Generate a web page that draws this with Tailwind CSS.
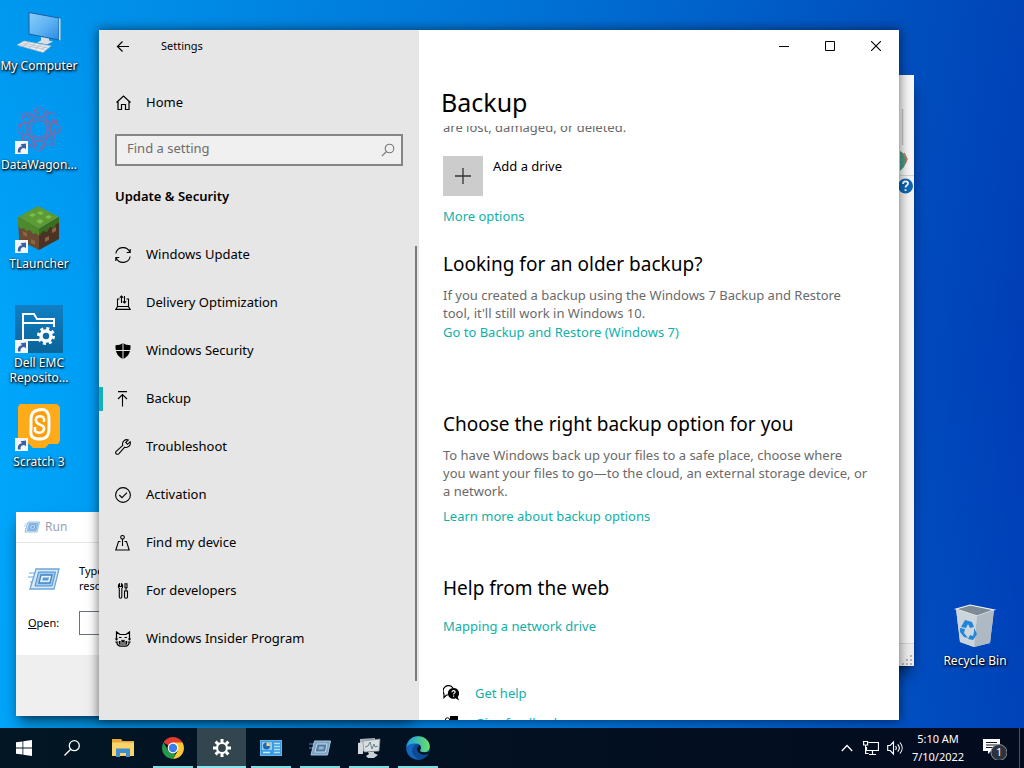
<!DOCTYPE html>
<html lang="en">
<head>
<meta charset="utf-8">
<title>Settings</title>
<script src="https://cdn.jsdelivr.net/npm/@tailwindcss/browser@4"></script>
</head>
<body class="flex h-screen flex-col overflow-hidden bg-[#0078d7] font-['Noto_Sans','Open_Sans',sans-serif] text-[13px] text-black">
<svg class="absolute h-0 w-0" aria-hidden="true">
  <defs>
    <symbol id="shortcut" viewBox="0 0 13 13"><path d="M0 0h13v13H0z" fill="#f4f6fa"/><path d="M3 11.500C2.400 8 4 5.500 7 5.300L5.600 3.200 11 2.500v5.800L9.300 7C6.500 7 5 8.500 5.600 11.500z" fill="#3a5fa8"/></symbol>
    <symbol id="run" viewBox="0 0 32 24"><path d="M1 6h6M0 10h5M2 15h4" stroke="#9cc8ec" stroke-width="1.500"/><path d="M8 2h23l-5 20H2z" fill="#d7eafa" stroke="#6ba6dc" stroke-width="1.300"/><path d="M10.500 5h17l-3.500 14H7z" fill="#9dcaf0" stroke="#4f8fcf"/><path d="M13 8h11l-2 8H11z" fill="#e3f1fc" stroke="#4483c4" stroke-width="1.300"/><path d="M15 10.500h6l-.8 3h-6z" fill="#5a98d6"/></symbol>
    <linearGradient id="screen" x1="0" y1="0" x2="1" y2="1"><stop offset="0" stop-color="#8ccdfb"/><stop offset=".5" stop-color="#5fb4f3"/><stop offset="1" stop-color="#2b8be0"/></linearGradient>
    <linearGradient id="edgeA" x1="0" y1="0" x2="1" y2="0"><stop offset="0" stop-color="#1b9de0"/><stop offset="1" stop-color="#6bdf6a"/></linearGradient>
    <linearGradient id="dell" x1="0" y1="0" x2="0" y2="1"><stop offset="0" stop-color="#0f7fc6"/><stop offset="1" stop-color="#0b6498"/></linearGradient>
  </defs>
</svg>

<main class="relative min-h-0 flex-1 overflow-hidden bg-linear-to-r from-[#00a6fb] via-[#0078dc] to-[#003db6]">
  <div class="absolute inset-0 bg-linear-to-b from-[#0060c0]/20 via-transparent to-[#00a0f0]/5"></div>

  <!-- Desktop shortcuts -->
  <ul class="absolute left-0 top-2 grid w-[78px] auto-rows-[99px] text-center text-xs leading-[15px] text-white [text-shadow:1px_1px_2px_#000,0_1px_3px_#000]">
    <li class="flex flex-col items-center gap-0.5">
      <svg class="h-12 w-12 shrink-0" viewBox="0 0 48 48"><path d="M14 4.500l30 5.500v22L14 26z" fill="url(#screen)" stroke="#1d5f9e"/><path d="M44 10l1.500 1v21.500L44 32z" fill="#cfd6dc"/><path d="M26 29l8 1.500v2l4 1-6 3-10-2 4-2z" fill="#d8dee4"/><path d="M9 33l27 5-8 6.500L2 37z" fill="#eceff2" stroke="#a9b4bd" stroke-width=".7"/><path d="M8 35l25 5M5.500 36.500l25 5M14 34l-6 4.500M20 35.500l-6 4.500M26 36.500l-6 5M31 37.500l-5 5" stroke="#aab5be" stroke-width=".7"/></svg>
      <span class="whitespace-nowrap">My Computer</span>
    </li>
    <li class="flex flex-col items-center gap-0.5">
      <svg class="h-12 w-12 shrink-0" viewBox="0 0 48 48"><g fill="none" stroke="#7f6cb4" stroke-width="1.200" opacity=".85"><ellipse cx="24" cy="22" rx="22" ry="8"/><ellipse cx="24" cy="22" rx="22" ry="8" transform="rotate(45 24 22)"/><ellipse cx="24" cy="22" rx="22" ry="8" transform="rotate(90 24 22)"/><ellipse cx="24" cy="22" rx="22" ry="8" transform="rotate(135 24 22)"/><circle cx="24" cy="22" r="12" stroke="#a8598c"/><circle cx="24" cy="22" r="16" stroke-dasharray="4 5" stroke="#b5527f"/><circle cx="24" cy="22" r="19" stroke-dasharray="5 7" stroke="#b5527f"/></g><use href="#shortcut" y="34" width="13" height="13"/></svg>
      <span class="whitespace-nowrap">DataWagon...</span>
    </li>
    <li class="flex flex-col items-center gap-0.5">
      <svg class="h-12 w-12 shrink-0" viewBox="0 0 48 48"><path d="M3 11L23 0l21 11-20 12z" fill="#5b9a35"/><path d="M3 11l21 12v21L4 34z" fill="#6a4a32"/><path d="M24 23l20-12v22L24 44z" fill="#4a3322"/><path d="M3 11l21 12v7l-3-3-3 1-3-4-4 1-2-3-3 1-3-3z" fill="#4c8a2b"/><path d="M24 23l20-12v6l-3 1-2 4-4-1-3 5-4-1-4 5z" fill="#3b6f20"/><path d="M14 9l4-2 3 2-4 2zM25 5l4 2-3 2-4-2zM30 11l4-2 3 2-4 2zM21 15l4-2 4 2-4 3z" fill="#7cbd4c"/><path d="M8 25l4 2v4l-4-2zM16 33l4 2v4l-4-2zM30 32l4-2v4l-4 2zM37 23l4-2v4l-4 2z" fill="#8a6546"/><use href="#shortcut" y="34" width="13" height="13"/></svg>
      <span>TLauncher</span>
    </li>
    <li class="flex flex-col items-center gap-0.5">
      <svg class="h-12 w-12 shrink-0" viewBox="0 0 48 48"><path d="M0 0h48v48H0z" fill="url(#dell)"/><path d="M24 35H8V9h11l3 5h17v8M8 18h31" fill="none" stroke="#fff" stroke-width="2"/><circle cx="31" cy="31" r="7.500" fill="none" stroke="#fff" stroke-width="3" stroke-dasharray="3 2.890"/><circle cx="31" cy="31" r="5" fill="#0b6ca8" stroke="#fff" stroke-width="3.500"/><use href="#shortcut" y="35" width="13" height="13"/></svg>
      <span class="whitespace-nowrap">Dell EMC<br>Reposito...</span>
    </li>
    <li class="flex flex-col items-center gap-0.5">
      <svg class="h-12 w-12 shrink-0" viewBox="0 0 48 48"><path d="M5 0h37l3 3v34l-2 3h-9l-4 4H18l-4-4H5l-2-3V3z" fill="#ffab19"/><path d="M23 6c8-2 11 2 11 10v8c0 8-3 11-9 11-8 0-10-3-9-11V15c0-5 2-8 7-9z" fill="#ff9d0a" stroke="#fff" stroke-width="3"/><path d="M29 14v4M29 14c-3-3-9-2-8 3s9 3 8 8-7 4-9 2v-4" fill="none" stroke="#fff" stroke-width="2.500"/><use href="#shortcut" y="34" width="13" height="13"/></svg>
      <span>Scratch 3</span>
    </li>
  </ul>

  <div class="absolute bottom-[60px] right-[9px] flex w-20 flex-col items-center gap-0.5 text-xs leading-[15px] text-white [text-shadow:1px_1px_2px_#000,0_1px_3px_#000]">
    <svg class="h-12 w-12" viewBox="0 0 48 48"><path d="M5 6l14-4 24 5-4 33-16 4-14-5z" fill="#c3cdd6"/><path d="M5 6l14-4 24 5-17 6z" fill="#7e8b96" stroke="#eef2f5" stroke-width="1.200"/><path d="M26 13l17-6-4 33-16 4z" fill="#aeb9c4"/><path d="M26 13L5 6l4 33 14 5z" fill="#ccd4dc"/><path d="M14 17l7 2 2 5-4 1-2-4-2 4-5-1zM9 25l5 1-1 4 4 5-4-1-4-5zM23 25l3 6-4 6-5-1 2-4 3 1 1-4z" fill="#1f86dc"/></svg>
    <span class="whitespace-nowrap">Recycle Bin</span>
  </div>

  <!-- Control panel window, mostly covered -->
  <div class="absolute bottom-[62px] left-[420px] right-[110px] top-[75px] flex flex-col items-end bg-[#f3f3f3] shadow-lg shadow-black/50">
    <div class="flex h-[101px] w-3.5 items-end border-b border-gray-300 bg-[#f6f6f6]">
      <svg class="h-[76px] w-3.5" viewBox="0 0 14 76"><path d="M2.500 10v36" stroke="#c4c7ca" stroke-width="1.500"/><path d="M0 52l3 2 4 7-3 7-4 4z" fill="#4f9a86"/><path d="M4 54l3 6-2 5" fill="none" stroke="#c0775a" stroke-width="1.500"/></svg>
    </div>
    <svg class="mt-0.5 h-4 w-4" viewBox="0 0 16 16"><circle cx="7.500" cy="8" r="7.500" fill="#0f66b5"/><path d="M5 6c0-3.500 5-3.500 5-.5 0 2-2.500 1.800-2.500 4M7.500 11.200v1.800" fill="none" stroke="#fff" stroke-width="1.800"/></svg>
    <div class="mt-auto flex h-[23px] w-full items-end justify-end border-t border-gray-300 bg-[#ececec]">
      <svg class="h-3 w-3" viewBox="0 0 12 12" fill="#b4b4b4"><path d="M8 1h2v2H8zM8 5h2v2H8zM8 9h2v2H8zM4 5h2v2H4zM4 9h2v2H4zM0 9h2v2H0z"/></svg>
    </div>
  </div>

  <!-- Run dialog -->
  <section class="absolute bottom-3 left-4 flex h-[204px] w-[399px] flex-col bg-white text-xs shadow-lg shadow-black/50">
    <header class="flex h-[31px] items-center gap-[5px] border-b border-gray-200 pl-2 text-gray-400"><svg class="h-3.5 w-4" viewBox="0 0 32 24"><use href="#run"/></svg>Run</header>
    <div class="mt-5 flex gap-4 pl-3 text-[11px] leading-[15px]">
      <svg class="mt-1 h-6 w-8 shrink-0" viewBox="0 0 32 24"><use href="#run"/></svg>
      <p class="pl-[3px]">Type the name of a program, folder, document, or<br>resource, and Windows will open it for you.</p>
    </div>
    <div class="mt-[18px] flex items-center pl-3 text-[11px]">
      <label for="open" class="w-[51px]"><u>O</u>pen:</label>
      <input id="open" type="text" class="h-6 w-72 border border-gray-500 bg-white">
    </div>
    <div class="mt-auto h-[61px] bg-[#efefef]"></div>
  </section>

  <!-- Settings window -->
  <section class="absolute bottom-2 left-[99px] right-[125px] top-[30px] flex bg-white shadow-[0_0_10px_1px_rgba(0,0,0,0.5)]">
    <aside class="flex w-80 shrink-0 flex-col bg-[#e6e6e6]">
      <header class="flex h-8 items-center gap-[30px] pl-4 pt-px text-[11px]">
        <button aria-label="Back"><svg class="h-4 w-4" viewBox="0 0 16 16" fill="none" stroke="#000" stroke-width="1.200"><path d="M14 7.500H2.500M7.500 2.500l-5 5 5 5"/></svg></button>
        <span>Settings</span>
      </header>
      <a href="#" class="mt-[17px] flex h-12 items-center gap-[15px] pl-4"><svg class="h-4 w-4" viewBox="0 0 16 16" fill="none" stroke="#000" stroke-width="1.200"><path d="M1.500 7.500L8.500 1l7 6.500M3 6.500v8h3.500v-5h4v5H14v-8"/></svg>Home</a>
      <div class="mx-4 mt-[7px] flex h-8 items-center border-2 border-[#858585] bg-[#f0f0f0] pr-1.5">
        <input type="text" aria-label="Find a setting" placeholder="Find a setting" class="mb-0.5 min-w-0 flex-1 bg-transparent pl-2.5 text-[13px] outline-none placeholder:text-[#6d6d6d]">
        <button aria-label="Search"><svg class="h-3.5 w-3.5" viewBox="0 0 14 14" fill="none" stroke="#777" stroke-width="1.100"><circle cx="8.500" cy="5.500" r="4.300"/><path d="M5.500 8.500L.8 13.200"/></svg></button>
      </div>
      <h2 class="mt-5 pl-4 text-[13px] font-semibold leading-5">Update &amp; Security</h2>
      <div class="mt-[25px] flex flex-1 justify-between">
        <nav class="flex-1">
          <a href="#" class="flex h-12 items-center gap-[15px] pl-4"><svg class="h-4 w-4" viewBox="0 0 16 16" fill="none" stroke="#000" stroke-width="1.100"><path d="M.8 6.500A7.400 7.400 0 0 1 14.800 5M15.200 9.500A7.400 7.400 0 0 1 1.200 11M15.200 2v3.500h-3.500M.8 14v-3.500h3.500"/></svg>Windows Update</a>
          <a href="#" class="flex h-12 items-center gap-[15px] pl-4"><svg class="h-4 w-4" viewBox="0 0 16 16" fill="none" stroke="#000" stroke-width="1.100"><path d="M4.500 4H2.500v7.500L.8 14.400h14.400l-1.700-2.900V4h-2M2.500 11.500h11M6.500 8V1M4.800 2.700L6.500 1l1.700 1.700M9.500 1v7M7.800 6.300L9.500 8l1.700-1.700"/></svg>Delivery Optimization</a>
          <a href="#" class="flex h-12 items-center gap-[15px] pl-4"><svg class="h-4 w-4" viewBox="0 0 16 16"><path d="M8 0c2 1.700 4.500 2.200 7.500 2.200C15.800 9 13.500 13.500 8 16 2.500 13.500.2 9 .5 2.200 3.500 2.200 6 1.700 8 0z"/><path d="M8 0v16M0 7.500h16" stroke="#e6e6e6"/></svg>Windows Security</a>
          <a href="#" aria-current="page" class="relative flex h-12 items-center gap-[15px] pl-4"><span class="absolute left-0 h-6 w-1 bg-[#13b2b5]"></span><svg class="h-4 w-4" viewBox="0 0 16 16" fill="none" stroke="#000" stroke-width="1.100"><path d="M3 .6h9M7.500 15.500v-12M3 8l4.500-4.500L12 8"/></svg>Backup</a>
          <a href="#" class="flex h-12 items-center gap-[15px] pl-4"><svg class="h-4 w-4" viewBox="0 0 16 16" fill="none" stroke="#000" stroke-width="1.100"><path d="M13.300.9A4.300 4.300 0 0 0 7.800 6.300L1.200 12.300a1.750 1.750 0 0 0 2.500 2.500L9.700 8.200A4.300 4.300 0 0 0 15.100 2.700L12.500 5.300 10.700 3.500z"/></svg>Troubleshoot</a>
          <a href="#" class="flex h-12 items-center gap-[15px] pl-4"><svg class="h-4 w-4" viewBox="0 0 16 16" fill="none" stroke="#000" stroke-width="1.100"><circle cx="8" cy="8" r="7.400"/><path d="M4.300 8l2.700 2.700 5-5"/></svg>Activation</a>
          <a href="#" class="flex h-12 items-center gap-[15px] pl-4"><svg class="h-4 w-4" viewBox="0 0 16 16" fill="none" stroke="#000" stroke-width="1.100"><circle cx="7.500" cy="2.300" r="1.800"/><path d="M7.500 4.100V11M5.500 6.500H3.500L.8 15h13.400l-2.700-8.500h-2"/></svg>Find my device</a>
          <a href="#" class="flex h-12 items-center gap-[15px] pl-4"><svg class="h-4 w-4" viewBox="0 0 16 16" fill="none" stroke="#000" stroke-width="1.100"><path d="M4.500.8C3 1.800 3 4.700 4.300 5.500V14c0 1.700 2.500 1.700 2.500 0V5.500C8 4.700 8 1.800 6.600.8v2.700H4.500zM10 .8h2v4h-2zM11 4.800v3M9.500 8h3v6c0 1.600-3 1.600-3 0zM9 8h4"/></svg>For developers</a>
          <a href="#" class="flex h-12 items-center gap-[15px] pl-4"><svg class="h-4 w-4" viewBox="0 0 16 16" fill="none" stroke="#000" stroke-width="1.200"><path d="M1.500 9.500V.9L5 3.500h6L14.500.9v8.600M0 8h3M13 8h3M.3 11h3M12.700 11h3M1.700 10.500c0 3 2 4.700 4 4.700h4.600c2 0 4-1.700 4-4.700M4 6.500h2.500M9.500 6.500H12M5 11h6M5 13h6M6.500 9L8 10.500 9.500 9M4.500 10v3.500M11.500 10v3.500"/></svg>Windows Insider Program</a>
        </nav>
        <div class="mb-[39px] mr-0.5 mt-[15px] w-0.5 bg-[#7c7c7c]"></div>
      </div>
    </aside>

    <div class="flex min-w-0 flex-1 flex-col pl-6">
      <div class="flex h-8 justify-end">
        <button aria-label="Minimize" class="flex w-[46px] items-center justify-center"><svg class="h-2.5 w-2.5" viewBox="0 0 10 10"><path d="M0 5.500h10" stroke="#000"/></svg></button>
        <button aria-label="Maximize" class="flex w-[46px] items-center justify-center"><svg class="h-2.5 w-2.5" viewBox="0 0 10 10"><path d="M.5.5h9v9h-9z" fill="none" stroke="#000"/></svg></button>
        <button aria-label="Close" class="flex w-[46px] items-center justify-center"><svg class="h-2.5 w-2.5" viewBox="0 0 10 10"><path d="M0 0l10 10M10 0L0 10" stroke="#000" stroke-width="1.100"/></svg></button>
      </div>
      <h1 class="-ml-0.5 mt-6 text-[25px] leading-8">Backup</h1>
      <div class="mt-2 min-h-0 flex-1 overflow-hidden pr-5 text-[13px] leading-[18px]">
        <p class="-mt-2 text-[#6a6a6a]">are lost, damaged, or deleted.</p>
        <div class="mt-5 flex gap-2.5">
          <button aria-label="Add a drive" class="flex h-10 w-10 items-center justify-center bg-[#cccccc]"><svg class="h-4 w-4" viewBox="0 0 16 16"><path d="M8 0v16M0 8h16" stroke="#333" stroke-width="1.300"/></svg></button>
          <span class="mt-px">Add a drive</span>
        </div>
        <a href="#" class="mt-[11px] block text-[#10b0a8]">More options</a>
        <h2 class="mt-[27px] text-[19px] leading-6">Looking for an older backup?</h2>
        <p class="mt-2.5 text-[#6a6a6a]">If you created a backup using the Windows 7 Backup and Restore<br>tool, it'll still work in Windows 10.</p>
        <a href="#" class="mt-px block text-[#10b0a8]">Go to Backup and Restore (Windows 7)</a>
        <h2 class="mt-[71px] text-[19px] leading-6">Choose the right backup option for you</h2>
        <p class="mt-2.5 text-[#6a6a6a]">To have Windows back up your files to a safe place, choose where<br>you want your files to go—to the cloud, an external storage device, or<br>a network.</p>
        <a href="#" class="mt-[7px] block text-[#10b0a8]">Learn more about backup options</a>
        <h2 class="mt-[51px] text-[19px] leading-6">Help from the web</h2>
        <a href="#" class="mt-[17px] block text-[#10b0a8]">Mapping a network drive</a>
        <a href="#" class="mt-[49px] flex items-center gap-4 text-[#10b0a8]"><svg class="h-4 w-4" viewBox="0 0 16 16"><path d="M5 10H3.500L1 12.500V9A5.200 5.200 0 1 1 10 3" fill="none" stroke="#000" stroke-width="1.200"/><path d="M10.500 3a5.400 5.400 0 1 0 2 10.300L16 15.500l-1.200-3.600A5.400 5.400 0 0 0 10.500 3z"/><path d="M9 7.200c0-2.200 3.200-2 3.200-.2 0 1.200-1.600 1.100-1.600 2.500M10.600 10.500v1.200" fill="none" stroke="#fff" stroke-width="1.100"/></svg>Get help</a>
        <a href="#" class="mt-3 flex items-center gap-4 text-[#10b0a8]"><svg class="h-4 w-4" viewBox="0 0 16 16"><path d="M7 1h8v8h-4l-3 3V9H7z"/><circle cx="4.500" cy="5" r="2.200" fill="none" stroke="#000"/><path d="M.5 15c0-8 8-8 8 0" fill="none" stroke="#000"/></svg>Give feedback</a>
      </div>
    </div>
  </section>
</main>

<!-- Taskbar -->
<footer class="flex h-10 shrink-0 items-stretch bg-linear-to-r from-[#021624] to-[#030b1f] text-white">
  <button aria-label="Start" class="flex w-12 items-center justify-center"><svg class="h-4 w-4" viewBox="0 0 16 16" fill="#fff"><path d="M0 2.300l6.500-.9v6.100H0zM7.300 1.300L16 0v7.500H7.300zM0 8.400h6.500v6.200L0 13.700zM7.300 8.400H16V16l-8.700-1.300z"/></svg></button>
  <button aria-label="Search" class="flex w-12 items-center justify-center"><svg class="h-4 w-4" viewBox="0 0 16 16" fill="none" stroke="#fff" stroke-width="1.300"><circle cx="10.300" cy="5.700" r="5"/><path d="M6.700 9.300L.5 15.500"/></svg></button>
  <button aria-label="File Explorer" class="ml-0.5 mr-px flex w-[49px] items-center justify-center"><svg class="h-[18px] w-[22px]" viewBox="0 0 22 18"><path d="M0 0h9l1.500 2H22v15H0z" fill="#e5aa35"/><path d="M0 3.500h22V17H0z" fill="#fbd56b"/><path d="M4 9.500h14V18h-4v-4H8v4H4z" fill="#3d8fd0"/></svg></button>
  <div class="flex">
    <button aria-label="Chrome" class="relative flex w-[49px] items-center justify-center"><svg class="h-[22px] w-[22px]" viewBox="0 0 22 22"><path d="M11 11L1.500 5.500A11 11 0 0 1 20.500 5.500z" fill="#e33b2e"/><path d="M11 11V5.500h9.500A11 11 0 0 1 11 22l4.800-8.300z" fill="#fcc934"/><path d="M1.500 5.500l4.700 8.300L11 16.500h2.800L11 22A11 11 0 0 1 1.500 5.500z" fill="#279847"/><circle cx="11" cy="11" r="5.400" fill="#fff"/><circle cx="11" cy="11" r="4.200" fill="#3b7ded"/></svg><span class="absolute bottom-0 h-0.5 w-10 bg-[#7fdde2]"></span></button>
    <button aria-label="Settings" class="relative flex w-[49px] items-center justify-center bg-[#334650]"><svg class="h-[18px] w-[18px]" viewBox="0 0 18 18" fill="none" stroke="#fff"><circle cx="9" cy="9" r="5" stroke-width="2.200"/><path d="M9 0v4M9 14v4M0 9h4M14 9h4M2.600 2.600l2.900 2.900M12.500 12.500l2.900 2.900M2.600 15.400l2.900-2.900M12.500 5.500l2.900-2.900" stroke-width="3"/></svg><span class="absolute bottom-0 h-0.5 w-full bg-[#8be6ec]"></span></button>
    <button aria-label="Control Panel" class="relative flex w-[49px] items-center justify-center"><svg class="h-4 w-[22px]" viewBox="0 0 22 16"><path d="M0 0h22v16H0z" fill="#63b8ee"/><path d="M1 1h20v14H1z" fill="#3a9be2"/><path d="M2 2h10v8H2z" fill="#8fcbf3"/><circle cx="6.500" cy="6" r="3.500" fill="#1e67b8"/><path d="M6.500 6V2.500A3.500 3.500 0 0 1 10 6z" fill="#fbd56b"/><path d="M14 3.500h6M14 6.500h6M14 9.500h6M14 12.500h6" stroke="#b5dffa" stroke-width="1.300"/><path d="M3 12.500h7" stroke="#d5effc" stroke-width="1.500"/></svg><span class="absolute bottom-0 h-0.5 w-10 bg-[#7fdde2]"></span></button>
    <button aria-label="Run" class="relative flex w-[49px] items-center justify-center"><svg class="h-4 w-[22px]" viewBox="0 0 22 16"><path d="M0 4h5M0 8h4" stroke="#5689a8"/><path d="M5.500 1H21.500l-3 14H2z" fill="#7fa3c0" stroke="#a7c8e2"/><path d="M8 4h10l-1.600 8H6z" fill="#54799b" stroke="#c1daee"/><path d="M10 6.500h5l-.7 3H9.300z" fill="#8fb6d8"/></svg><span class="absolute bottom-0 h-0.5 w-10 bg-[#7fdde2]"></span></button>
    <button aria-label="Performance Monitor" class="relative flex w-[49px] items-center justify-center"><svg class="h-5 w-6" viewBox="0 0 24 20"><path d="M3 1l15-1v12L3 13z" fill="#aab4ba"/><path d="M1 5l5-1v12H1z" fill="#d3d9dc"/><path d="M6 3l17-2-1 12-15 1z" fill="#d9dfe2" stroke="#87949c" stroke-width=".7"/><path d="M8 9l3-1 2-4 2 7 2-5 1 3 3-1" fill="none" stroke="#6b838e"/><path d="M11 14h6v1l4 2-4 3h-6l-2-2 3-2z" fill="#cbd2d6"/></svg><span class="absolute bottom-0 h-0.5 w-10 bg-[#7fdde2]"></span></button>
    <button aria-label="Edge" class="relative flex w-[49px] items-center justify-center"><svg class="h-6 w-6" viewBox="0 0 24 24"><circle cx="12" cy="12" r="11.800" fill="#1267bd"/><path d="M.3 11C1.500 4 6.500.2 12 .2c7 0 11.800 5 11.800 10 0 4-2.800 6-6 6-2.500 0-4-1-3.500-2 1.500-2 1-6-3.300-6.500C6 7 1.500 9 .3 11z" fill="url(#edgeA)"/><path d="M11 7.700C7.500 9 5 13 6.500 17s5 6.500 9 6.300c3-1 5.500-3 6.500-5.300-5 2.500-10.500.5-11-4-.2-1.700.5-3 1.300-3.800 1.300.5 2 2 1.700 3.300 1.300-2 .8-5.200-3-5.800z" fill="#0b4a94"/><path d="M14 14.200c1.300-1.700 1-4-.6-5.200l-2.100 2.500c-.6 1-.4 3 .7 4.500 2 2.700 7 4 10.500 1.500l1.500-3c-2 1.500-4.300 1.700-6.200 1.700-2.500 0-4.200-1-3.800-2z" fill="#021422"/></svg><span class="absolute bottom-0 h-0.5 w-10 bg-[#7fdde2]"></span></button>
  </div>
  <div class="ml-auto flex items-center pr-1">
    <button aria-label="Show hidden icons"><svg class="h-3 w-3" viewBox="0 0 12 12"><path d="M.8 9L6 3.500 11.200 9" fill="none" stroke="#fff" stroke-width="1.300"/></svg></button>
    <svg class="ml-2.5 h-4 w-4" viewBox="0 0 16 16" fill="none" stroke="#fff" stroke-width="1.200"><path d="M5.500 2.500h10v8H3.500V7M6 14.500h7M9.500 10.500v4M.6 1.500h4v3.500h-4zM2.600 5v8.500h3"/></svg>
    <svg class="ml-2 h-4 w-4" viewBox="0 0 16 16" fill="none" stroke="#fff" stroke-width="1.100"><path d="M.7 5.500h2.500L6.500 2v12L3.200 10.500H.7zM8.500 6c1 1.200 1 2.800 0 4M10.700 4.300c2 2.200 2 5.200 0 7.400M12.900 2.500c3 3.300 3 7.700 0 11"/></svg>
    <div class="ml-2 w-[54px] text-center text-[11px] leading-[18px]"><p class="whitespace-nowrap">5:10 AM</p><p>7/10/2022</p></div>
    <button aria-label="Notifications" class="relative ml-[18px] mr-3 h-6 w-6"><svg class="h-6 w-6" viewBox="0 0 24 24"><path d="M0 3h17v12H8l-3 3v-3H0z" fill="#fff"/><path d="M3 6.500h11M3 9h11M3 11.500h7" stroke="#0a1526"/><circle cx="16" cy="18.500" r="8" fill="#2c333c" stroke="#8a9098" transform="translate(0 -2)"/></svg><span class="absolute left-[13px] top-2 text-[11px] leading-4">1</span></button>
    <div class="h-10 w-px bg-[#4a5262]"></div>
  </div>
</footer>
</body>
</html>
